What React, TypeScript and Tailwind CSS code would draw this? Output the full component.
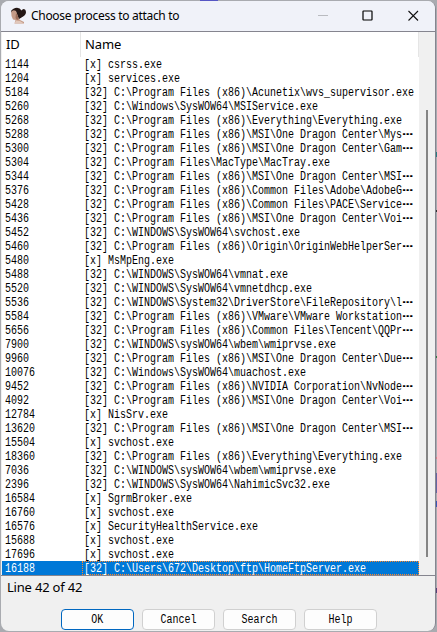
import React from "react";

const rows: [string, string][] = [
  ["1144", "[x] csrss.exe"],
  ["1204", "[x] services.exe"],
  ["5184", "[32] C:\\Program Files (x86)\\Acunetix\\wvs_supervisor.exe"],
  ["5260", "[32] C:\\Windows\\SysWOW64\\MSIService.exe"],
  ["5268", "[32] C:\\Program Files (x86)\\Everything\\Everything.exe"],
  ["5288", "[32] C:\\Program Files (x86)\\MSI\\One Dragon Center\\Mys…"],
  ["5300", "[32] C:\\Program Files (x86)\\MSI\\One Dragon Center\\Gam…"],
  ["5304", "[32] C:\\Program Files\\MacType\\MacTray.exe"],
  ["5344", "[32] C:\\Program Files (x86)\\MSI\\One Dragon Center\\MSI…"],
  ["5376", "[32] C:\\Program Files (x86)\\Common Files\\Adobe\\AdobeG…"],
  ["5428", "[32] C:\\Program Files (x86)\\Common Files\\PACE\\Service…"],
  ["5436", "[32] C:\\Program Files (x86)\\MSI\\One Dragon Center\\Voi…"],
  ["5452", "[32] C:\\WINDOWS\\SysWOW64\\svchost.exe"],
  ["5460", "[32] C:\\Program Files (x86)\\Origin\\OriginWebHelperSer…"],
  ["5480", "[x] MsMpEng.exe"],
  ["5488", "[32] C:\\WINDOWS\\SysWOW64\\vmnat.exe"],
  ["5520", "[32] C:\\WINDOWS\\SysWOW64\\vmnetdhcp.exe"],
  ["5536", "[32] C:\\WINDOWS\\System32\\DriverStore\\FileRepository\\l…"],
  ["5584", "[32] C:\\Program Files (x86)\\VMware\\VMware Workstation…"],
  ["5656", "[32] C:\\Program Files (x86)\\Common Files\\Tencent\\QQPr…"],
  ["7900", "[32] C:\\WINDOWS\\sysWOW64\\wbem\\wmiprvse.exe"],
  ["9960", "[32] C:\\Program Files (x86)\\MSI\\One Dragon Center\\Due…"],
  ["10076", "[32] C:\\Windows\\SysWOW64\\muachost.exe"],
  ["9452", "[32] C:\\Program Files (x86)\\NVIDIA Corporation\\NvNode…"],
  ["4092", "[32] C:\\Program Files (x86)\\MSI\\One Dragon Center\\Voi…"],
  ["12784", "[x] NisSrv.exe"],
  ["13620", "[32] C:\\Program Files (x86)\\MSI\\One Dragon Center\\MSI…"],
  ["15504", "[x] svchost.exe"],
  ["18360", "[32] C:\\Program Files (x86)\\Everything\\Everything.exe"],
  ["7036", "[32] C:\\WINDOWS\\sysWOW64\\wbem\\wmiprvse.exe"],
  ["2396", "[32] C:\\WINDOWS\\SysWOW64\\NahimicSvc32.exe"],
  ["16584", "[x] SgrmBroker.exe"],
  ["16760", "[x] svchost.exe"],
  ["16576", "[x] SecurityHealthService.exe"],
  ["15688", "[x] svchost.exe"],
  ["17696", "[x] svchost.exe"],
  ["16188", "[32] C:\\Users\\672\\Desktop\\ftp\\HomeFtpServer.exe"],
];

function Mono({ children }: { children: string }) {
  const cut = children.endsWith("…");
  return (
    <span className="block w-max shrink-0 origin-left scale-x-[0.8333] whitespace-pre font-['Liberation_Mono',monospace] text-[12px] leading-[16px]">
      {cut ? children.slice(0, -1) : children}
      {cut && <span className="inline-block h-[14px] w-[8px] origin-left scale-x-[1.8] align-top">⋯</span>}
    </span>
  );
}

function Portrait() {
  return (
    <svg className="ml-[6px] h-[18px] w-[19px]" viewBox="0 0 19 18">
      <path d="M2 4Q4 1 8 .8Q11 1 12.500 3.500Q14 1 16 2.500Q18 5 16 8Q14 9.500 12.500 10.500L10 12 8 8 7 5 3 6Z" fill="#241715" />
      <path d="M2.200 5Q4 2 7 4L8.500 8 9 11 11 13 15 15 15 16.500H5.500L6.500 13 4 12.500 2.500 9Z" fill="#c59b87" />
      <path d="M7 6L8.500 8 10 12 8 13 6.500 11Z" fill="#9b6d59" />
      <path d="M5.500 16.500L7 13.500 11 14 15 16.500Z" fill="#e1c8bb" />
    </svg>
  );
}

function Button({ label, primary }: { label: string; primary?: boolean }) {
  return (
    <button
      className={`flex h-[21px] w-[73px] items-center justify-center rounded-[4px] border bg-[#fdfdfd] text-black ${
        primary ? "border-[#0067c0]" : "border-[#d0d0d0]"
      }`}
    >
      <span className="block scale-x-[0.8333] pt-px font-['Liberation_Mono',monospace] text-[12px] leading-[14px]">{label}</span>
    </button>
  );
}

export default function App() {
  return (
    <div className="relative h-[632px] w-[437px] overflow-hidden bg-[#a9abb0] px-px pt-px font-['Noto_Sans','Open_Sans',sans-serif] text-black">
      <span className="absolute left-[200px] top-0 h-px w-[18px] bg-[#5656c4]" />
      <span className="absolute left-[436px] top-[152px] h-[5px] w-px bg-[#287c83]" />
      <span className="absolute left-[436px] top-[210px] h-[2px] w-px bg-[#333]" />
      <span className="absolute left-[436px] top-[356px] h-[2px] w-px bg-[#2f7942]" />
      <span className="absolute left-[436px] top-[457px] h-[2px] w-px bg-[#d0818a]" />
      <span className="absolute left-[436px] top-[473px] h-[20px] w-px bg-[#6565a2]" />
      <span className="absolute left-[436px] top-[501px] h-[6px] w-px bg-[#3b57b6]" />
      <span className="absolute left-[436px] top-[588px] h-[5px] w-px bg-[#574079]" />
      <div className="flex h-[630px] flex-col overflow-hidden rounded-[8px] border-r border-[#85858f] bg-[#f0f0f0]">
        <header className="flex h-[30px] shrink-0 items-center bg-[#f0f2f9] pl-[2px]">
          <Portrait />
          <span className="ml-[3px] text-[12px] leading-[18px] tracking-[-0.3px]">Choose process to attach to</span>
          <svg className="ml-auto mr-[14px] h-[12px] w-[104px]" viewBox="0 0 104 12" fill="none">
            <path d="M1 5.5H11" stroke="#b9bbc0" />
            <rect x="46" y="1" width="9" height="9" rx="0.5" stroke="#000" strokeWidth="1.2" />
            <path d="M91.5 1L101 10.5M101 1L91.5 10.5" stroke="#111" strokeWidth="1.1" />
          </svg>
        </header>
        <main className="flex h-[545px] shrink-0 border-y border-[#85858f] bg-[#f0f0f0] pl-px">
          <div className="w-[417px] shrink-0 bg-white">
            <div className="flex h-[25px] border-r border-[#e5e5e5] text-[13px] leading-[25px] tracking-[-0.1px]">
              <div className="w-[79px] border-r border-[#e5e5e5] pl-[4px]">ID</div>
              <div className="pl-[4px]">Name</div>
            </div>
            {rows.map(([id, name], i) => {
              const selected = i === rows.length - 1;
              return (
                <div key={id} className={`flex h-[14px] ${selected ? "bg-[#0078d7] text-white" : ""}`}>
                  <div className="flex w-[80px] shrink-0 pl-[3px]">
                    <Mono>{id}</Mono>
                  </div>
                  <div
                    className={`flex h-[14px] w-[337px] pl-[2px] ${
                      selected ? "outline-1 -outline-offset-1 outline-dotted outline-[#ff8728]" : ""
                    }`}
                  >
                    <Mono>{name}</Mono>
                  </div>
                </div>
              );
            })}
          </div>
          <div className="flex flex-1 justify-center pt-[78px]">
            <div className="h-[447px] w-[2px] bg-[#858585]" />
          </div>
        </main>
        <div className="h-[33px] shrink-0 pl-[6px] pt-[2px] text-[13px] leading-[18px] tracking-[-0.2px]">Line 42 of 42</div>
        <footer className="flex gap-[8px] pl-[60px]">
          <Button label="OK" primary />
          <Button label="Cancel" />
          <Button label="Search" />
          <Button label="Help" />
        </footer>
      </div>
    </div>
  );
}
